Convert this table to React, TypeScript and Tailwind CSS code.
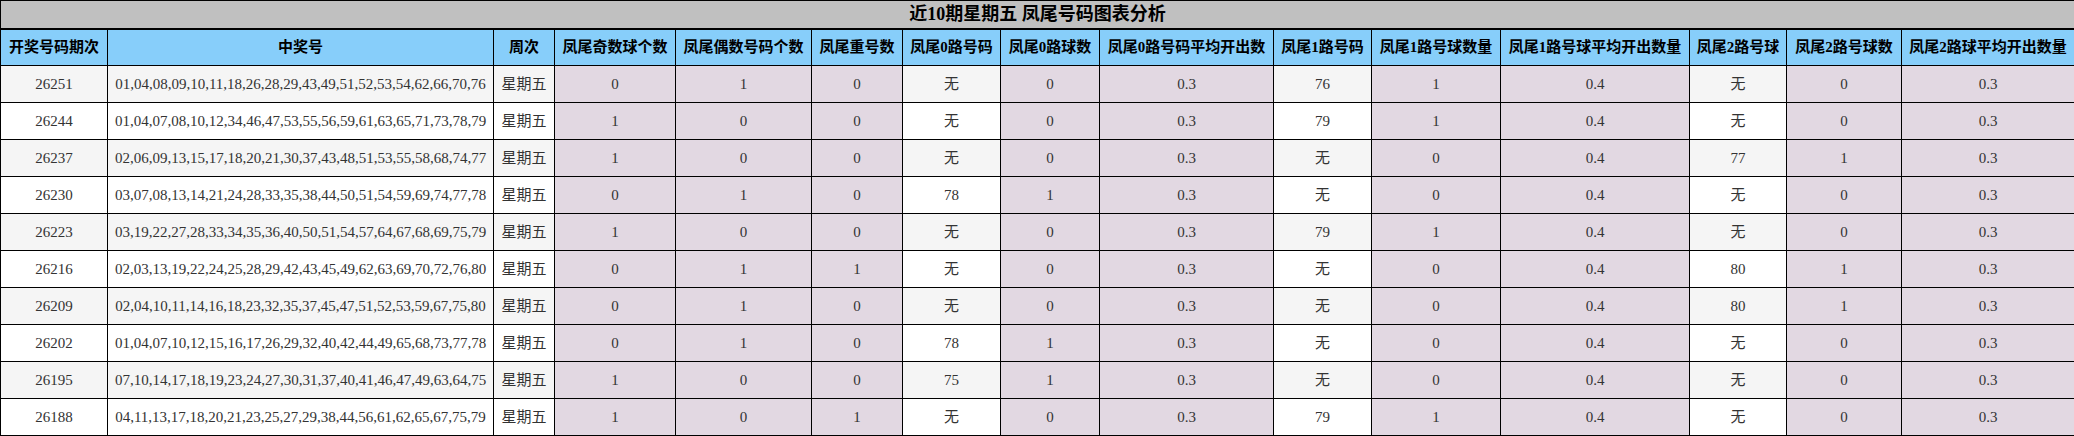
import React from 'react'

type Row = {
  issue: string
  nums: string
  odd: string
  even: string
  repeat: string
  r0: string
  r0c: string
  r0avg: string
  r1: string
  r1c: string
  r1avg: string
  r2: string
  r2c: string
  r2avg: string
}

const mk = (s: string): Row => {
  const [issue, nums, odd, even, repeat, r0, r0c, r0avg, r1, r1c, r1avg, r2, r2c, r2avg] = s.split('|')
  return { issue, nums, odd, even, repeat, r0, r0c, r0avg, r1, r1c, r1avg, r2, r2c, r2avg }
}

const rows: Row[] = [
  '26251|01,04,08,09,10,11,18,26,28,29,43,49,51,52,53,54,62,66,70,76|0|1|0|无|0|0.3|76|1|0.4|无|0|0.3',
  '26244|01,04,07,08,10,12,34,46,47,53,55,56,59,61,63,65,71,73,78,79|1|0|0|无|0|0.3|79|1|0.4|无|0|0.3',
  '26237|02,06,09,13,15,17,18,20,21,30,37,43,48,51,53,55,58,68,74,77|1|0|0|无|0|0.3|无|0|0.4|77|1|0.3',
  '26230|03,07,08,13,14,21,24,28,33,35,38,44,50,51,54,59,69,74,77,78|0|1|0|78|1|0.3|无|0|0.4|无|0|0.3',
  '26223|03,19,22,27,28,33,34,35,36,40,50,51,54,57,64,67,68,69,75,79|1|0|0|无|0|0.3|79|1|0.4|无|0|0.3',
  '26216|02,03,13,19,22,24,25,28,29,42,43,45,49,62,63,69,70,72,76,80|0|1|1|无|0|0.3|无|0|0.4|80|1|0.3',
  '26209|02,04,10,11,14,16,18,23,32,35,37,45,47,51,52,53,59,67,75,80|0|1|0|无|0|0.3|无|0|0.4|80|1|0.3',
  '26202|01,04,07,10,12,15,16,17,26,29,32,40,42,44,49,65,68,73,77,78|0|1|0|78|1|0.3|无|0|0.4|无|0|0.3',
  '26195|07,10,14,17,18,19,23,24,27,30,31,37,40,41,46,47,49,63,64,75|1|0|0|75|1|0.3|无|0|0.4|无|0|0.3',
  '26188|04,11,13,17,18,20,21,23,25,27,29,38,44,56,61,62,65,67,75,79|1|0|1|无|0|0.3|79|1|0.4|无|0|0.3',
].map(mk)

const headers = [
  '开奖号码期次',
  '中奖号',
  '周次',
  '凤尾奇数球个数',
  '凤尾偶数号码个数',
  '凤尾重号数',
  '凤尾0路号码',
  '凤尾0路球数',
  '凤尾0路号码平均开出数',
  '凤尾1路号码',
  '凤尾1路号球数量',
  '凤尾1路号球平均开出数量',
  '凤尾2路号球',
  '凤尾2路号球数',
  '凤尾2路球平均开出数量',
]

const widths = [107, 386, 61, 121, 136, 91, 98, 99, 174, 98, 129, 189, 97, 115, 173]

export default function App() {
  return (
    <div className="w-[2074px] bg-white font-['Liberation_Serif','Noto_Sans_CJK_SC',serif]">
      <table className="w-[2074px] table-fixed border-collapse border border-black">
        <colgroup>
          {widths.map((w, i) => (
            <col key={i} style={{ width: w }} />
          ))}
        </colgroup>
        <thead>
          <tr className="h-[28px]">
            <th
              colSpan={15}
              className="border-b-2 border-black bg-[#c0c0c0] p-0 text-center text-[18px] font-bold leading-none text-black"
            >
              近10期星期五 凤尾号码图表分析
            </th>
          </tr>
          <tr className="h-[37px] bg-[#87cefa]">
            {headers.map((h) => (
              <th
                key={h}
                className="border border-black p-0 text-center text-[15px] font-bold whitespace-nowrap text-black"
              >
                {h}
              </th>
            ))}
          </tr>
        </thead>
        <tbody>
          {rows.map((r, i) => {
            const plain = i % 2 === 0 ? 'bg-[#f5f5f5]' : 'bg-white'
            const purple = 'bg-[#e2d8e2]'
            const cell = 'border border-black p-0 text-center text-[15px] text-[#333] whitespace-nowrap'
            const cjk = 'text-[#222]'
            return (
              <tr key={r.issue} className="h-[37px]">
                <td className={`${cell} ${plain}`}>{r.issue}</td>
                <td className={`${cell} ${plain}`}>{r.nums}</td>
                <td className={`${cell} ${plain} ${cjk}`}>星期五</td>
                <td className={`${cell} ${purple}`}>{r.odd}</td>
                <td className={`${cell} ${purple}`}>{r.even}</td>
                <td className={`${cell} ${purple}`}>{r.repeat}</td>
                <td className={`${cell} ${plain} ${r.r0 === '无' ? cjk : ''}`}>{r.r0}</td>
                <td className={`${cell} ${purple}`}>{r.r0c}</td>
                <td className={`${cell} ${purple}`}>{r.r0avg}</td>
                <td className={`${cell} ${plain} ${r.r1 === '无' ? cjk : ''}`}>{r.r1}</td>
                <td className={`${cell} ${purple}`}>{r.r1c}</td>
                <td className={`${cell} ${purple}`}>{r.r1avg}</td>
                <td className={`${cell} ${plain} ${r.r2 === '无' ? cjk : ''}`}>{r.r2}</td>
                <td className={`${cell} ${purple}`}>{r.r2c}</td>
                <td className={`${cell} ${purple}`}>{r.r2avg}</td>
              </tr>
            )
          })}
        </tbody>
      </table>
    </div>
  )
}
